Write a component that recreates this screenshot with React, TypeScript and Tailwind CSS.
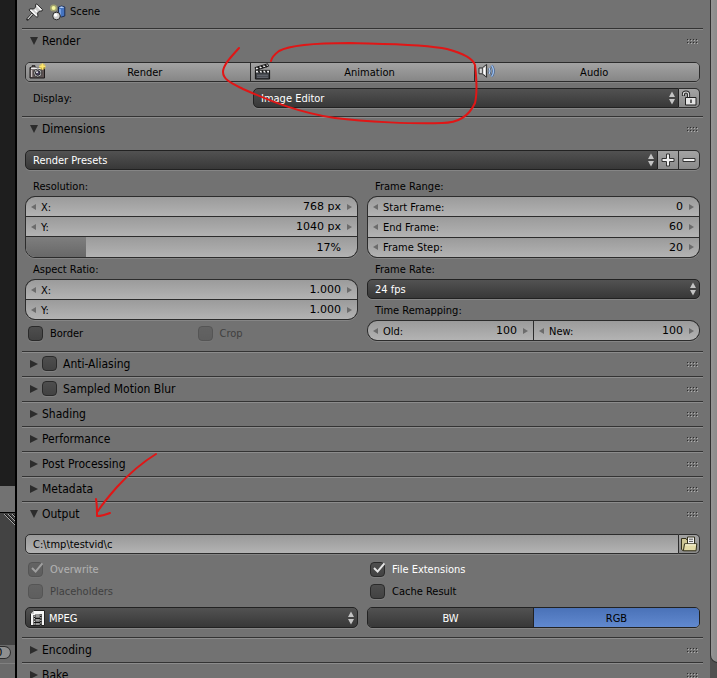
import React, { useState } from 'react';

const ArrowsIcon = () => (
  <svg width="6" height="14" viewBox="0 0 6 14" className="pointer-events-none absolute right-[3px] top-1/2 -translate-y-1/2">
    <path d="M3 0.5 L6 6 H0 Z" fill="#c4c4c4" />
    <path d="M3 13.5 L6 8 H0 Z" fill="#c4c4c4" />
  </svg>
);

const PinIcon = () => (
  <svg width="18" height="18" viewBox="0 0 18 18">
    <path d="M6.6 10.8 L1.5 16.4" stroke="#2b2b2b" strokeWidth="2.6" strokeLinecap="round" />
    <path d="M6.4 10.8 L1.8 16" stroke="#e8e8e8" strokeWidth="1.1" />
    <path d="M9.6 1.4 L10.8 1 L16.6 6.6 L16 8 L13.6 8 L11.6 10 L12 13.6 L11 14.4 L3 7 L3.8 5.8 L7.6 6 L9.6 4 Z" fill="#cdcdcd" stroke="#2b2b2b" strokeLinejoin="round" />
    <path d="M10.6 2.4 L15.2 7 M8.8 6.8 L11 9 M4.6 7 L10.8 12.8" stroke="#fff" strokeWidth="1.3" />
  </svg>
);

const SceneIcon = () => (
  <svg width="17" height="17" viewBox="0 0 17 17">
    <circle cx="3.6" cy="4" r="3.6" fill="#d8dc6a" opacity="0.45" />
    <circle cx="3.6" cy="4" r="2" fill="#f6f7a0" />
    <path d="M8.5 3 Q11.5 1 14.8 3 V12 Q11.5 14 8.5 12 Z" fill="#4574c0" stroke="#1c2c50" />
    <path d="M9 3.2 Q11.5 1.8 14.3 3.2 Q11.5 4.6 9 3.2 Z" fill="#bcd4fa" />
    <path d="M10 5 V11" stroke="#8db2ef" strokeWidth="1.4" />
    <circle cx="6.5" cy="12" r="3.8" fill="#d0d0d0" stroke="#2a2a2a" />
    <circle cx="5.6" cy="11" r="1.8" fill="#fff" />
  </svg>
);

const CameraIcon = () => (
  <svg width="17" height="17" viewBox="0 0 17 17">
    <path d="M1 4.5 H3 V2.8 H6 V4.5 H15.5 V15 H1 Z" fill="#5f5454" stroke="#1d1a1a" strokeLinejoin="round" />
    <path d="M2 5.4 H12" stroke="#eee" strokeWidth="1.6" />
    <path d="M2.6 7 V14" stroke="#c9c0c0" strokeWidth="1.4" />
    <circle cx="8.8" cy="10" r="4" fill="#dcdcdc" stroke="#222" strokeWidth="0.8" />
    <circle cx="8.8" cy="10" r="2.4" fill="#4b4560" stroke="#111" strokeWidth="0.8" />
    <circle cx="8" cy="9.2" r="0.9" fill="#fff" />
    <circle cx="13.4" cy="3.6" r="3.2" fill="#f3d64a" opacity="0.6" />
    <path d="M13.4 0 L14.4 2.6 L17 3.6 L14.4 4.6 L13.4 7.2 L12.4 4.6 L9.8 3.6 L12.4 2.6 Z" fill="#ffe76a" />
  </svg>
);

const ClapperIcon = () => (
  <svg width="17" height="17" viewBox="0 0 17 17">
    <path d="M1 4.6 L13.6 0.8 L14.6 3.2 L2 7.2 Z" fill="#eee" stroke="#161616" strokeLinejoin="round" />
    <path d="M3.6 3.8 L5.8 5.8 M7.2 2.8 L9.4 4.8 M10.8 1.8 L13 3.8" stroke="#161616" strokeWidth="1.7" />
    <path d="M1.4 7.4 H15.6 V16 H1.4 Z" fill="#3a3d42" stroke="#161616" />
    <path d="M2 8.6 H15" stroke="#eee" strokeWidth="1.7" />
    <path d="M4.4 7.4 L5.6 9.8 M8 7.4 L9.2 9.8 M11.6 7.4 L12.8 9.8" stroke="#161616" strokeWidth="1.6" />
    <path d="M3 12.2 H14 M3 14.2 H14" stroke="#7d838c" strokeWidth="0.8" />
  </svg>
);

const SpeakerIcon = () => (
  <svg width="18" height="16" viewBox="0 0 18 16">
    <path d="M1 5 H4.2 L8.6 1.4 V14.2 L4.2 10.8 H1 Z" fill="#d6d6d6" stroke="#2b2b2b" strokeLinejoin="round" />
    <path d="M4.4 5 V10.8" stroke="#444" />
    <path d="M6.4 5 V11" stroke="#fff" strokeWidth="1.2" />
    <path d="M11.2 5 Q12.8 8 11.2 11" fill="none" stroke="#3c5a85" strokeWidth="2.4" />
    <path d="M11.2 5 Q12.8 8 11.2 11" fill="none" stroke="#b7d1f3" strokeWidth="1.2" />
    <path d="M13.6 2.4 Q17.4 8 13.6 13.6" fill="none" stroke="#3c5a85" strokeWidth="2.6" />
    <path d="M13.6 2.4 Q17.4 8 13.6 13.6" fill="none" stroke="#9fc0ee" strokeWidth="1.4" />
  </svg>
);

const UnlockIcon = () => (
  <svg width="16" height="16" viewBox="0 0 16 16">
    <path d="M2.4 6 V4.2 Q2.4 2 5 2 Q7.6 2 7.6 4.6 V8" fill="none" stroke="#222" strokeWidth="3" />
    <path d="M2.4 5.4 V4.2 Q2.4 2 5 2 Q7.6 2 7.6 4.6 V8" fill="none" stroke="#ddd" strokeWidth="1.2" />
    <path d="M4.5 7.5 H15 V15 H4.5 Z" fill="#e4e4e4" stroke="#222" strokeLinejoin="round" />
    <path d="M10 9.6 V13" stroke="#555" strokeWidth="1.8" />
  </svg>
);

const PlusIcon = () => (
  <svg width="14" height="14" viewBox="0 0 14 14">
    <path d="M5.5 1 H8.5 V5.5 H13 V8.5 H8.5 V13 H5.5 V8.5 H1 V5.5 H5.5 Z" fill="#f0f0f0" stroke="#333" strokeLinejoin="round" />
  </svg>
);

const MinusIcon = () => (
  <svg width="14" height="14" viewBox="0 0 14 14">
    <path d="M1 5.5 H13 V8.5 H1 Z" fill="#f0f0f0" stroke="#333" strokeLinejoin="round" />
  </svg>
);

const FolderIcon = () => (
  <svg width="18" height="16" viewBox="0 0 18 16">
    <path d="M1.5 2.5 H6 L7 4 H14.5 V14.5 H2.5 L1.5 13 Z" fill="#cfc694" stroke="#33301c" strokeLinejoin="round" />
    <path d="M7.5 1 H14.5 V9 H7.5 Z" fill="#f4f4f4" stroke="#33301c" />
    <path d="M9 3.2 H13 M9 5.4 H13" stroke="#555" />
    <path d="M4.5 7.8 H16.8 L16 14.8 H3.4 Z" fill="#e4dca8" stroke="#33301c" strokeLinejoin="round" />
    <path d="M5.2 8.8 H16" stroke="#fffbe0" />
  </svg>
);

const FilmIcon = () => (
  <svg width="15" height="16" viewBox="0 0 15 16">
    <path d="M4 0.5 H14.5 V15.5 H0.5 V4 Z" fill="#f6f6f6" stroke="#222" strokeLinejoin="round" />
    <path d="M4 0.5 V4 H0.5" fill="#c8c8c8" />
    <path d="M5 4 H10 V15 H5 Z" fill="#9a9a9a" />
    <path d="M4.4 5 V15.4 M10.8 4 V15.4" stroke="#111" strokeWidth="2" />
    <path d="M5 8.4 H10 M5 12.4 H10" stroke="#111" strokeWidth="1.2" />
    <path d="M4.4 5.5 V15.4 M10.8 4.5 V15.4" stroke="#eee" strokeWidth="1" strokeDasharray="1.3 1.3" />
  </svg>
);

const Grip = () => (
  <svg width="12" height="6" viewBox="0 0 12 6" className="ml-auto mr-1 mt-0.5" shapeRendering="crispEdges">
    {[0, 3, 6, 9].map((x) => (
      <g key={x}>
        <path d={`M${x} 0h1v1h-1zM${x} 3h1v1h-1z`} fill="#2e2e2e" />
        <path d={`M${x + 1} 1h1v1h-1zM${x + 1} 4h1v1h-1z`} fill="#b0b0b0" />
      </g>
    ))}
  </svg>
);

interface CheckProps {
  label: string;
  defaultChecked?: boolean;
  disabled?: boolean;
  header?: boolean;
}

const Check: React.FC<CheckProps> = ({ label, defaultChecked = false, disabled = false, header = false }) => {
  const [checked, setChecked] = useState(defaultChecked);

  return (
    <label className={`flex items-center ${header ? 'gap-1.5 text-[12px]' : 'gap-[7px] pl-[3px] pt-px'} ${checked ? 'text-white' : ''}`}>
      <span className={`relative flex size-[15px] ${disabled ? 'opacity-40' : ''}`}>
        <input
          type="checkbox"
          checked={checked}
          disabled={disabled}
          onChange={(e) => setChecked(e.target.checked)}
          className="size-[15px] appearance-none rounded border border-[#2a2a2a] bg-linear-to-b from-[#4e4e4e] to-[#424242] shadow-[0_1px_0_#808080]"
        />
        {checked && (
          <svg width="14" height="13" viewBox="0 0 14 13" className="pointer-events-none absolute left-0.5 top-0">
            <path d="M2 6 L5.6 9.6 L12.4 1.4" fill="none" stroke="#e6e6e6" strokeWidth="2" />
          </svg>
        )}
      </span>
      <span className={disabled ? 'opacity-45' : ''}>{label}</span>
    </label>
  );
};

interface PanelProps {
  title: string;
  open?: boolean;
  checkbox?: boolean;
  children?: React.ReactNode;
}

const Panel: React.FC<PanelProps> = ({ title, open = false, checkbox = false, children }) => (
  <section className="border-t border-[#333333]">
    <div className="flex h-6 items-center border-t border-[#8c8c8c] pb-0.5 pl-2">
      <button type="button" aria-label={`Toggle ${title}`} className="mr-1 flex size-2">
        <svg width="8" height="8" viewBox="0 0 8 8">
          <path d={open ? 'M0 0 H8 L4 8 Z' : 'M0 0 L8 4 L0 8 Z'} fill="#2c2c2c" />
        </svg>
      </button>
      {checkbox ? <Check label={title} header /> : <h2 className="text-[12px]">{title}</h2>}
      <Grip />
    </div>
    {children}
  </section>
);

interface NumberRowProps {
  label: string;
  value: string;
}

const NumberRow: React.FC<NumberRowProps> = ({ label, value }) => (
  <label className="flex min-w-0 flex-1 items-center bg-linear-to-b from-[#9b9b9b] to-[#b3b3b3] px-[5px]">
    <svg width="5" height="6" viewBox="0 0 5 6" className="mr-[5px] shrink-0">
      <path d="M5 0 V6 L0 3 Z" fill="#6c6c6c" />
    </svg>
    <span className="whitespace-nowrap pt-0.5">{label}</span>
    <input type="text" defaultValue={value} className="h-4 w-0 min-w-0 flex-1 bg-transparent pt-px text-right font-['DejaVu_Sans',sans-serif] outline-none" />
    <svg width="5" height="6" viewBox="0 0 5 6" className="ml-1.5 shrink-0">
      <path d="M0 0 V6 L5 3 Z" fill="#6c6c6c" />
    </svg>
  </label>
);

const NumberGroup: React.FC<{ className: string; children: React.ReactNode }> = ({ className, children }) => (
  <div className={`flex gap-px overflow-hidden rounded-[10px] border border-[#2c2c2c] bg-[#2c2c2c] shadow-[0_1px_0_#858585] ${className}`}>
    {children}
  </div>
);

interface DropdownProps {
  label: string;
  value: string;
  className?: string;
  selectClass?: string;
  icon?: React.ReactNode;
}

const Dropdown: React.FC<DropdownProps> = ({ label, value, className = 'h-5 rounded-[5px]', selectClass = 'pl-[7px]', icon }) => (
  <div className={`relative flex min-w-0 flex-1 items-center border border-[#222222] bg-linear-to-b from-[#525252] to-[#383838] shadow-[0_1px_0_#858585] ${className}`}>
    {icon && <span className="pointer-events-none absolute left-1">{icon}</span>}
    <select aria-label={label} className={`h-full w-full appearance-none bg-transparent pt-0.5 text-white outline-none ${selectClass}`}>
      <option>{value}</option>
    </select>
    <ArrowsIcon />
  </div>
);

const ToolButton: React.FC<{ label: string; className?: string; children: React.ReactNode }> = ({ label, className = '', children }) => (
  <button
    type="button"
    aria-label={label}
    className={`flex h-5 w-[21px] shrink-0 items-center justify-center border border-l-0 border-[#2c2c2c] bg-linear-to-b from-[#a3a3a3] to-[#8a8a8a] shadow-[0_1px_0_#858585] ${className}`}
  >
    {children}
  </button>
);

const Caption: React.FC<{ children: React.ReactNode }> = ({ children }) => (
  <p className="flex h-[21px] items-center pl-2 pt-0.5">{children}</p>
);

const renderActions = [
  { name: 'Render', icon: <CameraIcon /> },
  { name: 'Animation', icon: <ClapperIcon /> },
  { name: 'Audio', icon: <SpeakerIcon /> },
];

// Sliver of the neighbouring editors on the left
const EditorEdge = () => (
  <aside className="flex w-[17px] shrink-0 flex-col border-r-2 border-black bg-[#1e1e1e]">
    <div className="h-[486px] shrink-0" />
    <div className="h-[26px] shrink-0 bg-[#727272]" />
    <div className="h-[133px] shrink-0 border-t border-black bg-[#434343]">
      <svg width="15" height="14" viewBox="0 0 15 14">
        <path d="M4 1 L15 12 M8 1 L15 8 M12 1 L15 4" stroke="#aaaaaa" />
        <path d="M5 1 L15 11 M9 1 L15 7 M13 1 L15 3" stroke="#111111" />
      </svg>
    </div>
    <div className="flex flex-1 flex-col overflow-hidden bg-[#6a6a6a]">
      <div className="mt-px flex h-[13px] w-[11px] items-center rounded-r-full border border-l-0 border-[#2c2c2c] bg-[#8f8f8f]">
        <span className="-ml-1">0</span>
      </div>
      <div className="mt-1 flex-1 border-t border-[#808080]" />
    </div>
  </aside>
);

// Hand-drawn marks on top of the panels
const Scribbles = () => (
  <svg width="717" height="678" viewBox="0 0 717 678" className="pointer-events-none absolute left-0 top-0" fill="none" stroke="#e01616" strokeWidth="2" strokeLinecap="round" strokeLinejoin="round">
    <path d="M239 48 C231 57 223 65 223 72 C223 80 233 84 243 89 C270 101 300 113 335 118 C365 122 415 124 442 123 C460 123 470 114 475 103 C478 91 476 74 475 65 C473 59 462 53 447 49 C425 44 385 44 350 43 C315 43 290 45 279 51 C275 54 272 57 271 61" />
    <path d="M156 454 C143 462 128 475 117 487 C110 495 103 503 98 511 M96 499 C97 504 97 510 97 516 C101 516 105 515 110 513" />
  </svg>
);

const App: React.FC = () => {
  return (
    <div className="relative flex h-screen overflow-hidden bg-[#727272] font-['DejaVu_Sans_Condensed','DejaVu_Sans',sans-serif] text-[11px] leading-4 text-black">
      <EditorEdge />

      <main className="min-w-0 flex-1 pl-[5px] pr-1.5">
        <header className="flex h-7 items-center pb-1 pl-1">
          <PinIcon />
          <span className="ml-1.5"><SceneIcon /></span>
          <h1 className="ml-[3px]">Scene</h1>
        </header>

        <Panel title="Render" open>
          <div className="flex flex-col gap-1.5 px-[3px] pb-2 pt-[9px]">
            <div className="flex overflow-hidden rounded-[5px] border border-[#2c2c2c] shadow-[0_1px_0_#858585]">
              {renderActions.map((action) => (
                <button
                  key={action.name}
                  type="button"
                  className="relative flex h-[18px] flex-1 items-center justify-center border-l border-[#2c2c2c] bg-linear-to-b from-[#a3a3a3] to-[#868686] pl-3.5 pt-0.5 first:border-l-0"
                >
                  <span className="absolute left-[3px] top-0">{action.icon}</span>
                  {action.name}
                </button>
              ))}
            </div>
            <div className="flex items-center">
              <span className="mr-[3px] w-1/3 shrink-0 pl-2 pt-0.5">Display:</span>
              <Dropdown label="Display" value="Image Editor" className="h-5 rounded-l-[5px]" />
              <ToolButton label="Lock interface" className="rounded-r-[5px]"><UnlockIcon /></ToolButton>
            </div>
          </div>
        </Panel>

        <Panel title="Dimensions" open>
          <div className="px-[3px] pb-2 pt-[9px]">
            <div className="mb-[5px] flex">
              <Dropdown label="Render Presets" value="Render Presets" className="h-5 rounded-l-[5px]" />
              <ToolButton label="Add preset"><PlusIcon /></ToolButton>
              <ToolButton label="Remove preset" className="rounded-r-[5px]"><MinusIcon /></ToolButton>
            </div>
            <div className="grid grid-cols-2 gap-[9px]">
              <div>
                <Caption>Resolution:</Caption>
                <NumberGroup className="h-[62px] flex-col">
                  <NumberRow label="X:" value="768 px" />
                  <NumberRow label="Y:" value="1040 px" />
                  <div className="relative flex h-5 bg-linear-to-b from-[#9b9b9b] to-[#b3b3b3]">
                    <div className="w-[18%] bg-linear-to-b from-[#7e7e7e] to-[#686868]" />
                    <input aria-label="Resolution percentage" type="text" defaultValue="17%" className="absolute inset-0 w-full bg-transparent pr-4 pt-0.5 text-right font-['DejaVu_Sans',sans-serif] outline-none" />
                  </div>
                </NumberGroup>
                <Caption>Aspect Ratio:</Caption>
                <NumberGroup className="h-[41px] flex-col">
                  <NumberRow label="X:" value="1.000" />
                  <NumberRow label="Y:" value="1.000" />
                </NumberGroup>
                <div className="mt-[3px] grid h-5 grid-cols-2 items-center gap-1.5">
                  <Check label="Border" />
                  <Check label="Crop" disabled />
                </div>
              </div>
              <div>
                <Caption>Frame Range:</Caption>
                <NumberGroup className="h-[62px] flex-col">
                  <NumberRow label="Start Frame:" value="0" />
                  <NumberRow label="End Frame:" value="60" />
                  <NumberRow label="Frame Step:" value="20" />
                </NumberGroup>
                <Caption>Frame Rate:</Caption>
                <Dropdown label="Frame Rate" value="24 fps" />
                <Caption>Time Remapping:</Caption>
                <NumberGroup className="h-[21px]">
                  <NumberRow label="Old:" value="100" />
                  <NumberRow label="New:" value="100" />
                </NumberGroup>
              </div>
            </div>
          </div>
        </Panel>

        <Panel title="Anti-Aliasing" checkbox />
        <Panel title="Sampled Motion Blur" checkbox />
        <Panel title="Shading" />
        <Panel title="Performance" />
        <Panel title="Post Processing" />
        <Panel title="Metadata" />

        <Panel title="Output" open>
          <div className="px-[3px] pb-[9px] pt-2">
            <div className="mb-1 flex">
              <input
                aria-label="Output path"
                type="text"
                defaultValue="C:\tmp\testvid\c"
                className="h-5 min-w-0 flex-1 rounded-l-[5px] border border-[#2c2c2c] bg-linear-to-b from-[#999999] to-[#b3b3b3] pl-[7px] shadow-[0_1px_0_#858585] outline-none"
              />
              <ToolButton label="Browse" className="rounded-r-[5px]"><FolderIcon /></ToolButton>
            </div>
            <div className="grid grid-cols-2 gap-x-[9px]">
              <div className="grid grid-rows-[22px_22px] items-center">
                <Check label="Overwrite" defaultChecked disabled />
                <Check label="Placeholders" disabled />
              </div>
              <div className="grid grid-rows-[22px_22px] items-center">
                <Check label="File Extensions" defaultChecked />
                <Check label="Cache Result" />
              </div>
            </div>
            <div className="mt-[5px] grid grid-cols-2 gap-[9px]">
              <div className="flex">
                <Dropdown label="File format" value="MPEG" selectClass="pl-[23px]" className="h-[21px] rounded-[5px]" icon={<FilmIcon />} />
              </div>
              <div className="flex overflow-hidden rounded-[5px] border border-[#222222] shadow-[0_1px_0_#858585]">
                <button type="button" className="h-[19px] flex-1 bg-linear-to-b from-[#525252] to-[#383838] pt-0.5 text-white">BW</button>
                <button type="button" className="h-[19px] flex-1 border-l border-[#222222] bg-linear-to-b from-[#4a72b8] to-[#6189cf] pt-0.5">RGB</button>
              </div>
            </div>
          </div>
        </Panel>

        <Panel title="Encoding" />
        <Panel title="Bake" />
      </main>

      {/* Scrollbar */}
      <div className="w-2 shrink-0 overflow-hidden pl-px">
        <div className="h-full bg-[#505050]">
          <div className="h-[663px] w-4 rounded-b-lg border border-t-0 border-[#303030] bg-linear-to-r from-[#959595] to-[#7c7c7c]" />
        </div>
      </div>

      <Scribbles />
    </div>
  );
};

export default App;
